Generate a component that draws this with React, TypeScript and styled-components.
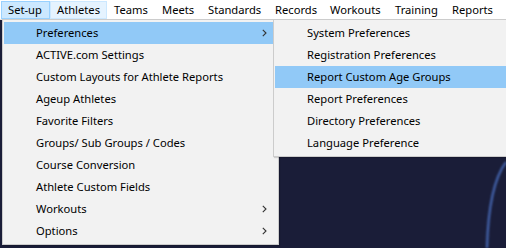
import styled, { createGlobalStyle } from "styled-components";

const GlobalStyle = createGlobalStyle`
  html, body {
    margin: 0;
    padding: 0;
    background: #1a1d38;
  }
  body {
    font-family: "Noto Sans", "Liberation Sans", sans-serif;
    font-size: 11.2px;
    color: #000;
  }
`;

const Screen = styled.div`
  width: 506px;
  height: 248px;
  display: flex;
  flex-direction: column;
  overflow: hidden;
  position: relative;
`;

const MenuBar = styled.div`
  height: 20px;
  flex: 0 0 20px;
  display: flex;
  align-items: stretch;
  background: #fff;
  border-bottom: 1px solid #e3e3e3;
  box-sizing: border-box;
  padding-left: 1px;
`;

const BarItem = styled.div<{ $w: number; $state?: "open" | "hover" }>`
  width: ${(p) => p.$w}px;
  flex: 0 0 auto;
  box-sizing: border-box;
  padding: 0 0 1px 6px;
  margin-top: 1px;
  height: 18px;
  display: flex;
  align-items: center;
  white-space: nowrap;
  border: 1px solid
    ${(p) =>
      p.$state === "open" ? "#99d1ff" : p.$state === "hover" ? "#cce8ff" : "transparent"};
  background: ${(p) =>
    p.$state === "open" ? "#cce8ff" : p.$state === "hover" ? "#e5f3ff" : "transparent"};
`;

const Desktop = styled.div`
  flex: 1;
  position: relative;
  background: #1a1d38;
`;

const Glow = styled.svg`
  position: absolute;
  right: 0;
  bottom: 0;
`;

const Dropdown = styled.div<{ $left: number; $width: number }>`
  position: absolute;
  top: -1px;
  left: ${(p) => p.$left}px;
  width: ${(p) => p.$width}px;
  box-sizing: border-box;
  background: #f2f2f2;
  border: 1px solid #cccccc;
  padding: 2px 2px 2px 1px;
  display: flex;
  flex-direction: column;
  box-shadow: 1px 1px 1px rgba(0, 0, 0, 0.15);
`;

const Row = styled.div<{ $active?: boolean }>`
  height: 22px;
  display: flex;
  align-items: center;
  padding-left: 32px;
  padding-right: 9px;
  padding-bottom: 1px;
  box-sizing: border-box;
  white-space: nowrap;
  background: ${(p) => (p.$active ? "#91c9f7" : "transparent")};
`;

const Label = styled.span`
  flex: 1;
`;

const Chevron = () => (
  <svg width="5" height="8" viewBox="0 0 5 8">
    <path d="M0.8 0.8 L4 4 L0.8 7.2" fill="none" stroke="#333" strokeWidth="1.1" />
  </svg>
);

const bar: [string, number, ("open" | "hover")?][] = [
  ["Set-up", 49, "open"],
  ["Athletes", 57, "hover"],
  ["Teams", 48],
  ["Meets", 46],
  ["Standards", 67],
  ["Records", 55],
  ["Workouts", 65],
  ["Training", 57],
  ["Reports", 55],
];

const setup: [string, boolean?][] = [
  ["Preferences", true],
  ["ACTIVE.com Settings"],
  ["Custom Layouts for Athlete Reports"],
  ["Ageup Athletes"],
  ["Favorite Filters"],
  ["Groups/ Sub Groups / Codes"],
  ["Course Conversion"],
  ["Athlete Custom Fields"],
  ["Workouts", true],
  ["Options", true],
];

const prefs = [
  "System Preferences",
  "Registration Preferences",
  "Report Custom Age Groups",
  "Report Preferences",
  "Directory Preferences",
  "Language Preference",
];

export default function App() {
  return (
    <Screen>
      <GlobalStyle />
      <MenuBar>
        {bar.map(([name, w, state]) => (
          <BarItem key={name} $w={w} $state={state}>
            {name}
          </BarItem>
        ))}
      </MenuBar>
      <Desktop>
        <Glow width="40" height="90" viewBox="0 0 40 90">
          <defs>
            <filter id="b" x="-50%" y="-50%" width="200%" height="200%">
              <feGaussianBlur stdDeviation="1.2" />
            </filter>
          </defs>
          <path d="M40 4 C 28 20, 22 50, 21 90" fill="none" stroke="#4a6fc0" strokeWidth="2" filter="url(#b)" />
        </Glow>
        <Dropdown $left={2} $width={277}>
          {setup.map(([name, sub], i) => (
            <Row key={name} $active={i === 0}>
              <Label>{name}</Label>
              {sub && <Chevron />}
            </Row>
          ))}
        </Dropdown>
        <Dropdown $left={273} $width={260}>
          {prefs.map((name, i) => (
            <Row key={name} $active={i === 2}>
              <Label>{name}</Label>
            </Row>
          ))}
        </Dropdown>
      </Desktop>
    </Screen>
  );
}
